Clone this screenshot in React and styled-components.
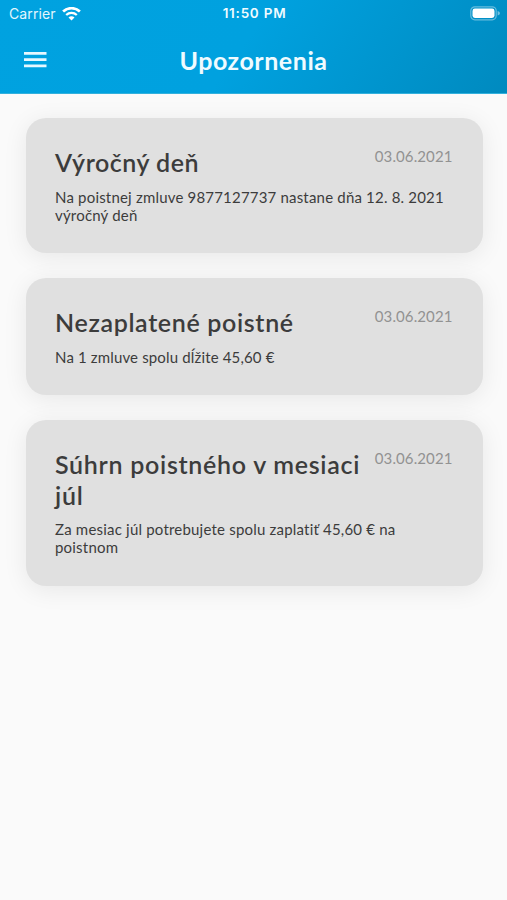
import React from 'react';
import styled, { createGlobalStyle } from 'styled-components';

const GlobalStyle = createGlobalStyle`
  * { box-sizing: border-box; }
  body { margin: 0; background: #fafafa; }
`;

const Screen = styled.div`
  min-height: 900px;
  background: #fafafa;
  font-family: Lato, 'Liberation Sans', sans-serif;
  color: #3c3c3c;
`;

const Header = styled.header`
  height: 94px;
  background: linear-gradient(125deg, #00a2e0 0%, #00a1df 48%, #008abf 100%);
  border-bottom: 1px solid #32b0dc;
  color: #fff;
`;

const StatusBar = styled.div`
  display: grid;
  grid-template-columns: 1fr auto 1fr;
  align-items: center;
  height: 27px;
  padding: 0 7px 0 9px;
  font: 500 13px/27px Inter, sans-serif;
`;

const Carrier = styled.div`
  display: flex;
  align-items: center;
  gap: 6px;
  font-weight: 400;
  font-size: 14px;
  letter-spacing: 0.1px;
  color: #e3f6fd;
`;

const Clock = styled.div`
  font-size: 13.5px;
  font-weight: 600;
  letter-spacing: 0.75px;
  color: #f0fbff;
`;

const Battery = styled.svg`
  justify-self: end;
`;

const NavBar = styled.div`
  display: grid;
  grid-template-columns: 60px 1fr 60px;
  align-items: center;
  height: 66px;
`;

const MenuButton = styled.button`
  display: flex;
  padding: 0 0 0 24px;
  border: 0;
  background: none;
`;

const PageTitle = styled.h1`
  margin: 0;
  text-align: center;
  font-size: 25px;
  line-height: 32px;
  font-weight: 700;
  letter-spacing: 0.55px;
  color: #effbff;
`;

const List = styled.main`
  display: flex;
  flex-direction: column;
  gap: 24.5px;
  padding: 24px 24.5px 0 25.5px;
`;

const Card = styled.article`
  padding: 29.4px 30px 29px 29.5px;
  border-radius: 20px;
  background: #e0e0e0;
  box-shadow: 0 4px 24px rgba(0, 0, 0, 0.08);
`;

const CardHead = styled.div`
  display: flex;
  justify-content: space-between;
  align-items: flex-start;
`;

const CardTitle = styled.h2`
  margin: 0;
  font-size: 25px;
  line-height: 30.5px;
  font-weight: 600;
  white-space: pre;
  letter-spacing: ${(p) => p.$tracking}px;
`;

const CardDate = styled.time`
  font-size: 15px;
  line-height: 19px;
  color: #929292;
  letter-spacing: 0.1px;
`;

const Message = styled.p`
  margin: 10px 0 0;
  font-size: 15px;
  line-height: 18.3px;
  white-space: pre;
  letter-spacing: ${(p) => p.$tracking}px;
`;

const notices = [
  {
    title: 'Výročný deň',
    text: 'Na poistnej zmluve 9877127737 nastane dňa 12. 8. 2021\nvýročný deň',
    titleTracking: 0.5,
    textTracking: 0.19,
  },
  {
    title: 'Nezaplatené poistné',
    text: 'Na 1 zmluve spolu dĺžite 45,60 €',
    titleTracking: 0.65,
    textTracking: 0.15,
  },
  {
    title: 'Súhrn poistného v mesiaci\njúl',
    text: 'Za mesiac júl potrebujete spolu zaplatiť 45,60 € na\npoistnom',
    titleTracking: 0.71,
    textTracking: 0.2,
  },
];

export default function App() {
  return (
    <Screen>
      <GlobalStyle />
      <Header>
        <StatusBar>
          <Carrier>
            Carrier
            <svg width="19" height="14" viewBox="0 0 19 14" fill="none" stroke="#fff">
              <path d="M1.1 4.500C5.800.1 13.200.1 17.900 4.500" strokeWidth="2.700" />
              <path d="M4.200 8c3-2.800 7.600-2.800 10.600 0" strokeWidth="2.300" />
              <path d="M9.500 13.500 6.500 10.500c1.700-1.600 4.300-1.600 6 0Z" fill="#fff" stroke="none" />
            </svg>
          </Carrier>
          <Clock>11:50 PM</Clock>
          <Battery width="30" height="15" viewBox="0 0 30 15">
            <rect x=".8" y=".8" width="25.4" height="13" rx="4" fill="none" stroke="#fff" strokeOpacity=".4" strokeWidth="1.2" />
            <rect x="2.5" y="2.6" width="22" height="9.4" rx="2.4" fill="#fff" />
            <path d="M27.6 5v4.6c1.8-.7 2.3-1.4 2.3-2.3S29.4 5.7 27.6 5Z" fill="#fff" fillOpacity=".45" />
          </Battery>
        </StatusBar>
        <NavBar>
          <MenuButton aria-label="Menu">
            <svg width="23" height="16" viewBox="0 0 23 16" fill="#e6f8ff">
              <path d="M0 0h22.5v2.7H0zM0 6.3h22.5V9H0zM0 12.5h22.5v2.7H0z" />
            </svg>
          </MenuButton>
          <PageTitle>Upozornenia</PageTitle>
        </NavBar>
      </Header>
      <List>
        {notices.map((n) => (
          <Card key={n.title}>
            <CardHead>
              <CardTitle $tracking={n.titleTracking}>{n.title}</CardTitle>
              <CardDate>03.06.2021</CardDate>
            </CardHead>
            <Message $tracking={n.textTracking}>{n.text}</Message>
          </Card>
        ))}
      </List>
    </Screen>
  );
}
